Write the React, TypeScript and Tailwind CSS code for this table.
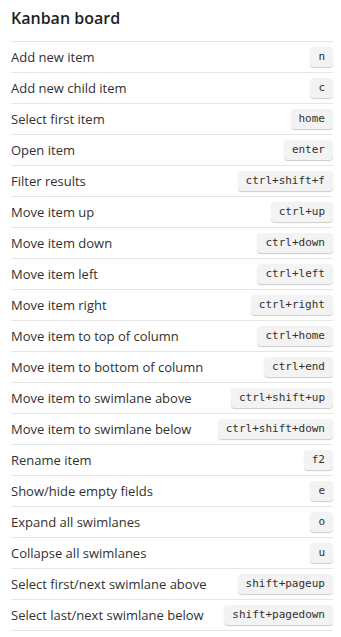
const shortcuts: [string, string][] = [
  ['Add new item', 'n'],
  ['Add new child item', 'c'],
  ['Select first item', 'home'],
  ['Open item', 'enter'],
  ['Filter results', 'ctrl+shift+f'],
  ['Move item up', 'ctrl+up'],
  ['Move item down', 'ctrl+down'],
  ['Move item left', 'ctrl+left'],
  ['Move item right', 'ctrl+right'],
  ['Move item to top of column', 'ctrl+home'],
  ['Move item to bottom of column', 'ctrl+end'],
  ['Move item to swimlane above', 'ctrl+shift+up'],
  ['Move item to swimlane below', 'ctrl+shift+down'],
  ['Rename item', 'f2'],
  ['Show/hide empty fields', 'e'],
  ['Expand all swimlanes', 'o'],
  ['Collapse all swimlanes', 'u'],
  ['Select first/next swimlane above', 'shift+pageup'],
  ['Select last/next swimlane below', 'shift+pagedown'],
];

export default function App() {
  return (
    <div className="min-h-screen bg-white pl-[11px] pr-[8px] font-['Open_Sans',sans-serif] text-[#323130]">
      <h2 className="h-[41px] pt-[7px] text-[16px] font-semibold leading-[22px] text-[#201f1e]">
        Kanban board
      </h2>
      <ul className="border-t border-[#e6e6e6]">
        {shortcuts.map(([label, key]) => (
          <li
            key={label}
            className="flex h-[31px] items-center justify-between border-b border-[#e6e6e6]"
          >
            <span className="text-[13px] leading-[20px]">{label}</span>
            <kbd className="rounded-[4px] bg-[#f3f3f3] px-[8px] py-[3px] font-['DejaVu_Sans_Mono',monospace] text-[11px] leading-[14px] text-[#323130] shadow-[0_1px_1px_rgba(0,0,0,0.2)]">
              {key}
            </kbd>
          </li>
        ))}
      </ul>
    </div>
  );
}
